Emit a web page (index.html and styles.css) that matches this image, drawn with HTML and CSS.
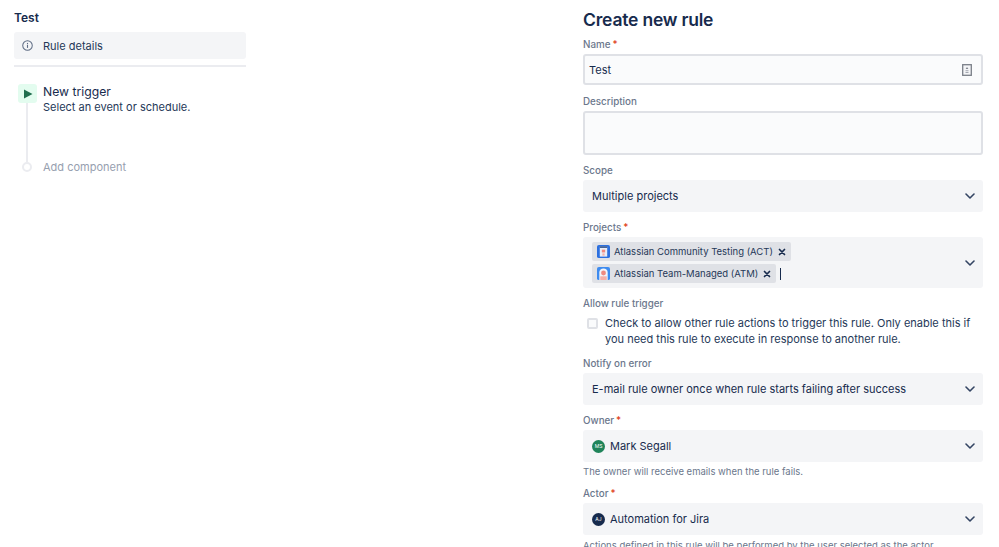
FILE: index.html
```html
<!DOCTYPE html>
<html lang="en">
<head>
<meta charset="utf-8">
<title>Create new rule</title>
<link rel="stylesheet" href="styles.css">
</head>
<body>
<div class="page">
  <aside class="side">
    <h2 class="side-title">Test</h2>
    <div class="details">
      <svg class="info" viewBox="0 0 12 12" width="11" height="11"><circle cx="6" cy="6" r="5.2" fill="none" stroke="#5e6c84" stroke-width="1.1"/><rect x="5.4" y="5.2" width="1.2" height="3.4" fill="#5e6c84"/><rect x="5.4" y="3.2" width="1.2" height="1.2" fill="#5e6c84"/></svg>
      <span>Rule details</span>
    </div>
    <hr class="rule">
    <div class="trigger">
      <div class="rail">
        <div class="play"><svg viewBox="0 0 10 10" width="10" height="10"><path d="M1 0.5 L9.5 5 L1 9.5 Z" fill="#216e4e"/></svg></div>
        <div class="rail-line"></div>
        <div class="rail-dot"></div>
      </div>
      <div class="trigger-text">
        <div class="trigger-name">New trigger</div>
        <div class="trigger-sub">Select an event or schedule.</div>
        <div class="add">Add component</div>
      </div>
    </div>
  </aside>
  <main class="form">
    <h1 class="form-title">Create new rule</h1>
    <label class="label">Name<span class="req">*</span></label>
    <div class="input">
      <span>Test</span>
      <svg class="id-icon" viewBox="0 0 10 12" width="10" height="12"><rect x="0.7" y="0.7" width="8.6" height="10.6" fill="#f4f5f7" stroke="#7a7f88" stroke-width="1.3"/><path d="M5 3 L6.3 5 L3.7 5 Z" fill="#7a7f88"/><rect x="3.5" y="6.3" width="3" height="0.9" fill="#9a9fa8"/><rect x="3.5" y="8" width="3" height="0.9" fill="#9a9fa8"/></svg>
    </div>
    <label class="label gap-more">Description</label>
    <div class="textarea"></div>
    <label class="label gap">Scope</label>
    <div class="select"><span>Multiple projects</span><svg class="chev" viewBox="0 0 10 6" width="10" height="6"><path d="M1 1 L5 5 L9 1" fill="none" stroke="#344563" stroke-width="1.6" stroke-linecap="round" stroke-linejoin="round"/></svg></div>
    <label class="label gap">Projects<span class="req">*</span></label>
    <div class="select multi">
      <div class="tags">
        <div class="tag">
          <svg class="tag-icon" viewBox="0 0 14 14" width="13" height="13"><rect width="14" height="14" rx="2" fill="#2b6fe0"/><rect x="3" y="1.5" width="8" height="11" fill="#e8eef8"/><rect x="5.2" y="5" width="3.6" height="3" fill="#f08a80"/><rect x="5.8" y="9" width="2.4" height="2.5" fill="#f6b0a8"/><rect x="3" y="1.5" width="8" height="1.5" fill="#1c3f7c"/></svg>
          <span>Atlassian Community Testing (ACT)</span>
          <svg class="tag-x" viewBox="0 0 8 8" width="8" height="8"><path d="M1.5 1.5 L6.5 6.5 M6.5 1.5 L1.5 6.5" stroke="#172b4d" stroke-width="1.7" stroke-linecap="round"/></svg>
        </div>
        <div class="tag-row">
          <div class="tag">
            <svg class="tag-icon" viewBox="0 0 14 14" width="13" height="13"><rect width="14" height="14" rx="2" fill="#3d8bf0"/><path d="M2.5 14 V6 A4.5 4.5 0 0 1 11.5 6 V14 Z" fill="#f3f5fa"/><circle cx="7" cy="6.5" r="2.6" fill="#f08a80"/><rect x="3.5" y="10" width="7" height="4" fill="#f6b0a8"/></svg>
            <span>Atlassian Team-Managed (ATM)</span>
            <svg class="tag-x" viewBox="0 0 8 8" width="8" height="8"><path d="M1.5 1.5 L6.5 6.5 M6.5 1.5 L1.5 6.5" stroke="#172b4d" stroke-width="1.7" stroke-linecap="round"/></svg>
          </div>
          <span class="caret"></span>
        </div>
      </div>
      <svg class="chev" viewBox="0 0 10 6" width="10" height="6"><path d="M1 1 L5 5 L9 1" fill="none" stroke="#344563" stroke-width="1.6" stroke-linecap="round" stroke-linejoin="round"/></svg>
    </div>
    <label class="label gap">Allow rule trigger</label>
    <div class="check">
      <span class="box"></span>
      <span class="check-text">Check to allow other rule actions to trigger this rule. Only enable this if you need this rule to execute in response to another rule.</span>
    </div>
    <label class="label gap-more">Notify on error</label>
    <div class="select"><span>E-mail rule owner once when rule starts failing after success</span><svg class="chev" viewBox="0 0 10 6" width="10" height="6"><path d="M1 1 L5 5 L9 1" fill="none" stroke="#344563" stroke-width="1.6" stroke-linecap="round" stroke-linejoin="round"/></svg></div>
    <label class="label gap">Owner<span class="req">*</span></label>
    <div class="select"><span class="who"><span class="avatar green">MS</span>Mark Segall</span><svg class="chev" viewBox="0 0 10 6" width="10" height="6"><path d="M1 1 L5 5 L9 1" fill="none" stroke="#344563" stroke-width="1.6" stroke-linecap="round" stroke-linejoin="round"/></svg></div>
    <p class="help">The owner will receive emails when the rule fails.</p>
    <label class="label gap">Actor<span class="req">*</span></label>
    <div class="select"><span class="who"><span class="avatar navy">AJ</span>Automation for Jira</span><svg class="chev" viewBox="0 0 10 6" width="10" height="6"><path d="M1 1 L5 5 L9 1" fill="none" stroke="#344563" stroke-width="1.6" stroke-linecap="round" stroke-linejoin="round"/></svg></div>
    <p class="help">Actions defined in this rule will be performed by the user selected as the actor.</p>
  </main>
</div>
</body>
</html>
```
FILE: styles.css
```css
* { box-sizing: border-box; }
html, body { margin: 0; height: 100%; overflow: hidden; background: #fff; }
body { font-family: Inter, "Liberation Sans", sans-serif; color: #172b4d; font-size: 11px; }
.page { display: flex; justify-content: space-between; height: 547px; overflow: hidden; padding: 0 16px 0 14px; }
.side { width: 232px; flex: none; padding-top: 10px; }
.side-title { margin: 0 0 6px; font-size: 12px; line-height: 16px; font-weight: 600; }
.details { height: 27px; background: #f4f5f7; border-radius: 3px; display: flex; align-items: center; padding-left: 8px; gap: 10px; font-size: 11px; color: #253858; }
.info { flex: none; }
.rule { border: 0; height: 2px; background: #ebecf0; margin: 6px 0 17px; }
.trigger { display: flex; padding-left: 4px; gap: 6px; }
.rail { width: 19px; display: flex; flex-direction: column; align-items: center; flex: none; }
.play { width: 19px; height: 19px; background: #e3fcef; border-radius: 3px; display: flex; align-items: center; justify-content: center; flex: none; }
.rail-line { width: 2px; height: 59px; background: #ebecf0; margin-right: 1px; }
.rail-dot { width: 10px; height: 10px; border-radius: 50%; border: 2px solid #ebecf0; background: #fff; margin-right: 1px; }
.trigger-text { margin-top: -1px; }
.trigger-name { font-size: 12.2px; line-height: 17px; color: #172b4d; }
.trigger-sub { font-size: 11px; line-height: 13px; color: #253858; margin-top: 1px; }
.add { font-size: 11px; line-height: 16px; color: #97a0af; margin-top: 45px; }
.form { width: 400px; flex: none; padding-top: 8px; }
.form-title { margin: 0 0 7px; font-size: 17.5px; line-height: 23px; font-weight: 600; letter-spacing: -0.2px; color: #172b4d; }
.label { display: block; font-size: 9.8px; line-height: 14px; font-weight: 500; color: #6b778c; margin-bottom: 2px; }
.gap { margin-top: 9px; }
.gap-more { margin-top: 10px; }
.req { color: #de350b; margin-left: 2px; }
.input { height: 31px; background: #fafbfc; border: 2px solid #dfe1e6; border-radius: 3px; display: flex; align-items: center; justify-content: space-between; padding: 0 9px 0 4px; font-size: 11px; }
.textarea { height: 44px; background: #fafbfc; border: 2px solid #dfe1e6; border-radius: 3px; }
.select { height: 32px; background: #f4f5f7; border-radius: 3px; display: flex; align-items: center; justify-content: space-between; padding: 0 8px 0 9px; font-size: 11px; color: #172b4d; }
.chev { flex: none; }
.multi { height: 51px; }
.tags { display: flex; flex-direction: column; align-items: flex-start; gap: 3px; }
.tag-row { display: flex; align-items: center; }
.tag { height: 19px; background: #dfe1e6; border-radius: 2px; display: flex; align-items: center; padding: 0 5px; font-size: 9.5px; color: #253858; gap: 4px; }
.tag-icon { flex: none; }
.tag-x { margin-left: 1px; flex: none; }
.caret { width: 1px; height: 12px; background: #172b4d; margin-left: 4px; }
.check { display: flex; padding-left: 4px; gap: 7px; margin-top: 4px; }
.box { width: 11px; height: 11px; margin-top: 3px; border: 2px solid #dfe1e6; border-radius: 2px; background: #fafbfc; flex: none; }
.check-text { font-size: 11px; line-height: 16px; color: #253858; }
.who { display: flex; align-items: center; gap: 5px; }
.avatar { width: 13px; height: 13px; border-radius: 50%; display: flex; align-items: center; justify-content: center; font-size: 5px; color: #fff; flex: none; }
.green { background: #1f845a; }
.navy { background: #172b4d; }
.help { margin: 3px 0 0; font-size: 9.5px; line-height: 13px; color: #6b778c; }
.help:last-child { margin-top: 4px; }
```
